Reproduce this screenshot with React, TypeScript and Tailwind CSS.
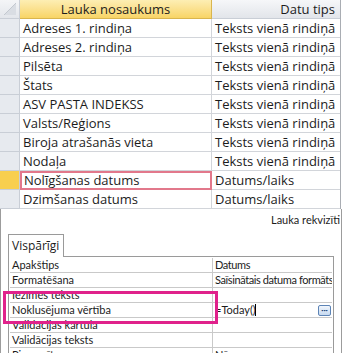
const fields: [string, string][] = [
  ["Adreses 1. rindiņa", "Teksts vienā rindiņā"],
  ["Adreses 2. rindiņa", "Teksts vienā rindiņā"],
  ["Pilsēta", "Teksts vienā rindiņā"],
  ["Štats", "Teksts vienā rindiņā"],
  ["ASV PASTA INDEKSS", "Teksts vienā rindiņā"],
  ["Valsts/Reģions", "Teksts vienā rindiņā"],
  ["Biroja atrašanās vieta", "Teksts vienā rindiņā"],
  ["Nodaļa", "Teksts vienā rindiņā"],
  ["Nolīgšanas datums", "Datums/laiks"],
  ["Dzimšanas datums", "Datums/laiks"],
];

const props: [string, string][] = [
  ["Apakštips", "Datums"],
  ["Formatēšana", "Saīsinātais datuma formāts"],
  ["Iezīmes teksts", ""],
  ["Noklusējuma vērtība", "=Today()"],
  ["Validācijas kārtula", ""],
  ["Validācijas teksts", ""],
  ["Pieprasīts", "Nē"],
];

function FieldRow({ name, type, active }: { name: string; type: string; active?: boolean }) {
  return (
    <div className="flex h-[19px]">
      <div
        className={
          active
            ? "w-[20px] shrink-0 bg-[#f8cf4f] border-r border-b border-[#c9ced6]"
            : "w-[20px] shrink-0 bg-[#e7eaef] border-r border-b border-[#c9ced6]"
        }
      />
      <div
        className={
          active
            ? "w-[192px] shrink-0 border-2 border-[#e2788b] pl-[2px] leading-[15px] whitespace-nowrap overflow-hidden"
            : "w-[192px] shrink-0 border-r border-b border-[#d2d5da] pl-[3px] leading-[18px] whitespace-nowrap overflow-hidden"
        }
      >
        {name}
      </div>
      <div className="flex-1 border-b border-[#d2d5da] pl-[3px] leading-[18px] whitespace-nowrap overflow-hidden">
        {type}
      </div>
    </div>
  );
}

function PropRow({ label, value, i }: { label: string; value: string; i: number }) {
  return (
    <div className="flex h-[15px] border-b border-[#c9c9c9] overflow-hidden">
      <div className="w-[203px] shrink-0 border-r border-[#c9c9c9] pl-[2px] leading-[14px] whitespace-nowrap">
        {label}
      </div>
      <div className="flex flex-1 items-center justify-between pl-[2px] pr-[1px] whitespace-nowrap tracking-[-0.4px]">
        {i === 3 ? (
          <>
            <span className="flex items-center leading-[14px] tracking-normal">
              {value}
              <span className="ml-[-1px] h-[12px] w-px bg-black" />
            </span>
            <span className="flex h-[11px] w-[13px] items-center justify-center rounded-[2px] border border-[#5d84b6] bg-gradient-to-b from-[#f1f6fc] to-[#c6d9f0] text-[8px] font-bold leading-none tracking-normal text-[#1d3f78]">
              ···
            </span>
          </>
        ) : (
          <span className="leading-[14px]">{value}</span>
        )}
      </div>
    </div>
  );
}

export default function App() {
  return (
    <div className="relative h-[353px] w-[342px] overflow-hidden bg-white font-['Open_Sans',sans-serif] text-[#1c1c1c]">
      <div className="text-[13px] border-r border-[#a9adb3] mr-[1px]">
        <div className="flex h-[19px]">
          <div className="w-[20px] shrink-0 border-r border-b border-[#c9ced6] bg-gradient-to-b from-[#f4f5f7] to-[#e3e6eb]">
            <svg width="19" height="18" viewBox="0 0 19 18">
              <polygon points="16,3 16,15 4,15" fill="#d9dde3" />
              <line x1="4" y1="15" x2="16" y2="3" stroke="#c3c8cf" />
            </svg>
          </div>
          <div className="w-[192px] shrink-0 border-r border-b border-[#d9b54e] bg-gradient-to-b from-[#fdeeb3] to-[#f8d465] text-center leading-[18px]">
            Lauka nosaukums
          </div>
          <div className="flex-1 border-b border-[#c9ced6] bg-gradient-to-b from-[#f6f7f9] to-[#e2e5ea] pr-[5px] text-right leading-[18px]">
            Datu tips
          </div>
        </div>
        {fields.map(([n, t], i) => (
          <FieldRow key={n} name={n} type={t} active={i === 8} />
        ))}
      </div>

      <div className="h-[144px] border-l border-r border-[#9c9c9c]">
        <div className="h-[25px] pr-[1px] pt-[4px] text-right font-['Lato',sans-serif] text-[11px] leading-[14px]">
          Lauka rekvizīti
        </div>
        <div className="pl-[7px]">
          <div className="relative z-10 -mb-px h-[23px] w-[56px] border border-b-0 border-[#9a9a9a] bg-white pl-[3px] text-[12px] leading-[22px]">
            Vispārīgi
          </div>
        </div>
        <div className="ml-[7px] w-[326px] border border-[#9a9a9a] px-[1px] pt-[1px] font-['Lato',sans-serif] text-[11px]">
          {props.map(([l, v], i) => (
            <PropRow key={l} label={l} value={v} i={i} />
          ))}
        </div>
      </div>

      <div className="absolute left-[3px] top-[291px] h-[33px] w-[215px] border-[3px] border-[#e0228b]" />
    </div>
  );
}
